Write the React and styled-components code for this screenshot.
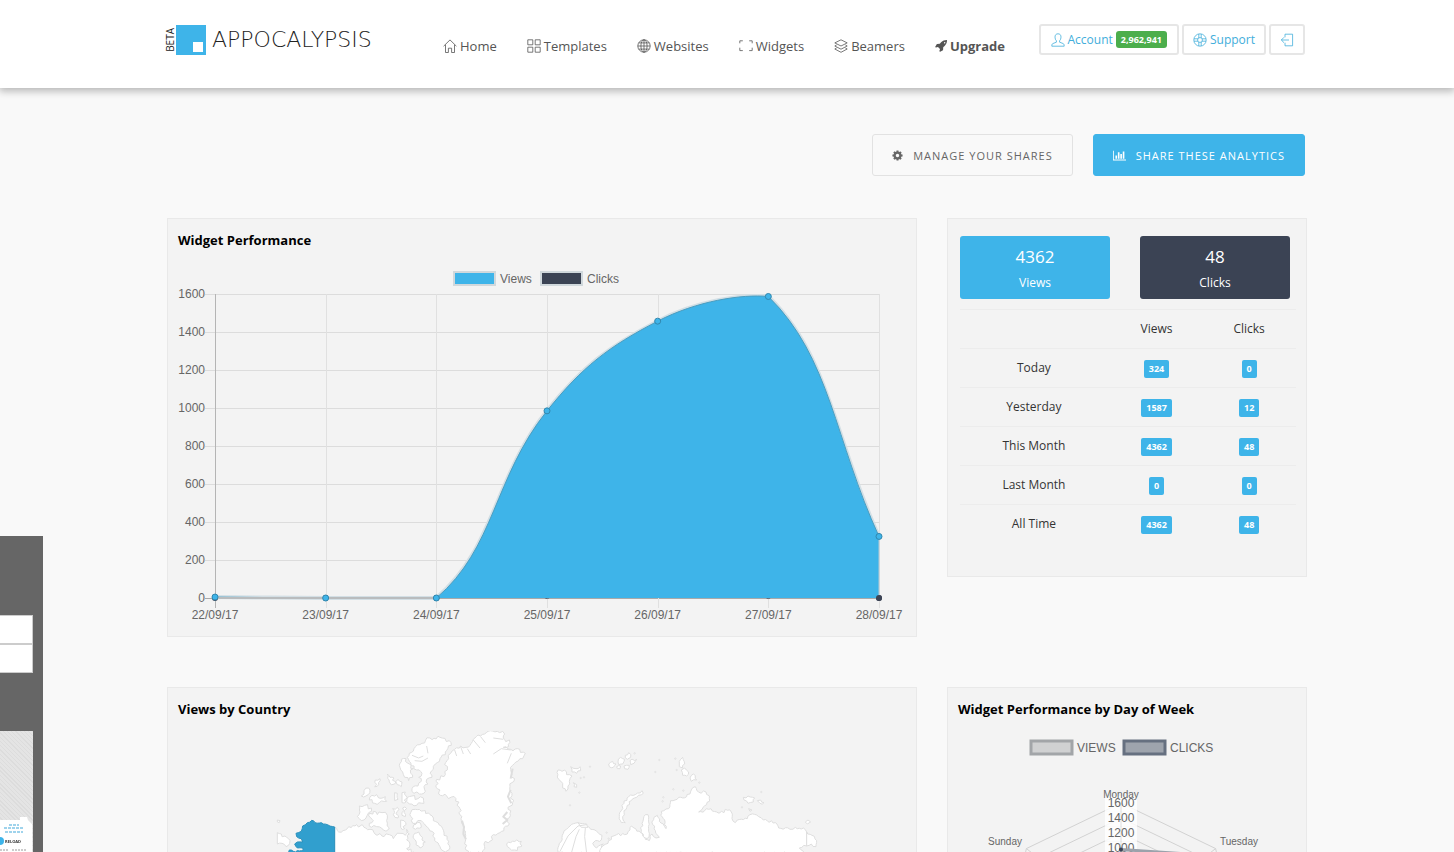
import React from "react";
import styled, { createGlobalStyle } from "styled-components";

const days = [
  { label: "22/09/17", views: 5, clicks: 0 },
  { label: "23/09/17", views: 0, clicks: 0 },
  { label: "24/09/17", views: 0, clicks: 0 },
  { label: "25/09/17", views: 985, clicks: 12 },
  { label: "26/09/17", views: 1457, clicks: 24 },
  { label: "27/09/17", views: 1587, clicks: 12 },
  { label: "28/09/17", views: 324, clicks: 0 },
];

const totals = [
  { label: "Today", views: 324, clicks: 0 },
  { label: "Yesterday", views: 1587, clicks: 12 },
  { label: "This Month", views: 4362, clicks: 48 },
  { label: "Last Month", views: 0, clicks: 0 },
  { label: "All Time", views: 4362, clicks: 48 },
];

const weekdays = [
  { label: "Monday", views: 985 },
  { label: "Tuesday", views: 1457 },
  { label: "Wednesday", views: 1587 },
  { label: "Thursday", views: 324 },
  { label: "Friday", views: 5 },
  { label: "Saturday", views: 0 },
  { label: "Sunday", views: 0 },
];

/* ---------- icons ---------- */

const HomeIcon = () => (
  <LineIcon viewBox="0 0 14 14">
    <path d="M.6 7.200 7 .9l6.400 6.300M2.500 5.800v7.700h2.900V9.200h3.200v4.300h2.900V5.800" />
  </LineIcon>
);

const GridIcon = () => (
  <LineIcon viewBox="0 0 14 14">
    <path d="M.8.8h5v5h-5zM8.200.8h5v5h-5zM.8 8.200h5v5h-5zM8.200 8.200h5v5h-5z" />
  </LineIcon>
);

const GlobeIcon = () => (
  <LineIcon viewBox="0 0 14 14">
    <circle cx="7" cy="7" r="6.200" />
    <ellipse cx="7" cy="7" rx="3.100" ry="6.200" />
    <path d="M7 .8v12.400M.8 7h12.400M1.700 3.900h10.600M1.700 10.100h10.600" />
  </LineIcon>
);

const FrameIcon = () => (
  <LineIcon viewBox="0 0 14 14">
    <path d="M.8 4.300V1.800h3M10.200 1.800h3v2.500M13.200 8.700v2.900h-3M3.800 11.600h-3V8.700" />
  </LineIcon>
);

const LayersIcon = () => (
  <LineIcon viewBox="0 0 14 14">
    <path d="M7 .8l6.200 3.100L7 7 .8 3.900zM2.600 6 .8 7 7 10.200 13.200 7l-1.800-1M2.600 9l-1.800 1L7 13.300l6.200-3.300-1.800-1" />
  </LineIcon>
);

const UserIcon = () => (
  <LineIcon viewBox="0 0 14 14">
    <path d="M7 .8c2 0 3 1.300 3 3.300 0 1.600-.5 2.900-1.400 3.700v1.400l3.400 1.300c.8.300 1.200 1 1.200 2.700H.8c0-1.700.4-2.400 1.200-2.700l3.400-1.300V7.800C4.500 7 4 5.700 4 4.100c0-2 1-3.300 3-3.300z" />
  </LineIcon>
);

const SupportIcon = () => (
  <LineIcon viewBox="0 0 14 14">
    <circle cx="7" cy="7" r="6.200" />
    <circle cx="7" cy="7" r="2.400" />
    <path d="M5.800 1v4M8.200 1v4M5.800 9v4M8.200 9v4M1 5.800h4M1 8.200h4M9 5.800h4M9 8.200h4" />
  </LineIcon>
);

const LogoutIcon = () => (
  <LineIcon viewBox="0 0 14 14">
    <path d="M5 4.300V1.200h7.600v11.600H5V9.700M9 7H1.300M4 4.300 1.300 7 4 9.700" />
  </LineIcon>
);

const RocketIcon = () => (
  <SolidIcon $size={12} viewBox="0 64 1664 1664">
    <path d="M1440 448q0-40-28-68t-68-28-68 28-28 68 28 68 68 28 68-28 28-68zM1664 96q0 249-75.500 430.500t-253.500 360.500q-81 80-195 176l-20 379q-2 16-16 26l-384 224q-7 4-16 4-12 0-23-9l-64-64q-13-14-8-32l85-276-281-281-276 85q-3 1-9 1-14 0-23-9l-64-64q-17-19-5-39l224-384q10-14 26-16l379-20q96-114 176-195 188-187 358-258t431-71q14 0 24 9.500t10 22.500z" />
  </SolidIcon>
);

const CogIcon = () => (
  <SolidIcon $size={11} viewBox="64 64 1664 1664">
    <path d="M1152 896q0-106-75-181t-181-75-181 75-75 181 75 181 181 75 181-75 75-181zm512-109v222q0 12-8 23t-20 13l-185 28q-19 54-39 91 35 50 107 138 10 12 10 25t-9 23q-27 37-99 108t-94 71q-12 0-26-9l-138-108q-44 23-91 38-16 136-29 186-7 28-36 28h-222q-14 0-24.500-8.500t-11.500-21.500l-28-184q-49-16-90-37l-141 107q-10 9-25 9-14 0-25-11-126-114-165-168-7-10-7-23 0-12 8-23 15-21 51-66.500t54-70.500q-27-50-41-99l-183-27q-13-2-21-12.500t-8-23.500v-222q0-12 8-23t19-13l186-28q14-46 39-92-40-57-107-138-10-12-10-24 0-10 9-23 26-36 98.500-107.500t94.500-71.500q13 0 26 10l138 107q44-23 91-38 16-136 29-186 7-28 36-28h222q14 0 24.500 8.500t11.500 21.500l28 184q49 16 90 37l142-107q9-9 24-9 13 0 25 10 129 119 165 170 7 8 7 22 0 12-8 23-15 21-51 66.500t-54 70.500q26 50 41 98l183 28q13 2 21 12.500t8 23.500z" />
  </SolidIcon>
);

const ChartIcon = () => (
  <SolidIcon $size={13} viewBox="0 0 2048 1792">
    <path d="M640 896v512h-256v-512h256zM1024 384v1024h-256v-1024h256zM2048 1536v128h-2048v-1536h128v1408h1920zM1408 640v768h-256v-768h256zM1792 256v1152h-256v-1152h256z" />
  </SolidIcon>
);

/* ---------- line chart ---------- */

const plot = { left: 47, right: 711, top: 32, bottom: 336 };
const maxViews = 1600;
const px = (i) => plot.left + (i * (plot.right - plot.left)) / (days.length - 1);
const py = (v) => plot.bottom - (v / maxViews) * (plot.bottom - plot.top);
const clampY = (y) => Math.min(plot.bottom, Math.max(plot.top, y));

const smoothPath = (pts, tension = 0.4) => {
  const ctrl = pts.map((p, i) => {
    const prev = pts[i - 1] || p;
    const next = pts[i + 1] || p;
    const d0 = Math.hypot(p.x - prev.x, p.y - prev.y);
    const d1 = Math.hypot(next.x - p.x, next.y - p.y);
    const a = (tension * d0) / (d0 + d1);
    const b = (tension * d1) / (d0 + d1);
    const dx = next.x - prev.x;
    const dy = next.y - prev.y;
    return {
      before: [p.x - a * dx, clampY(p.y - a * dy)],
      after: [p.x + b * dx, clampY(p.y + b * dy)],
    };
  });
  return pts
    .map((p, i) =>
      i === 0
        ? `M${p.x} ${p.y}`
        : `C${ctrl[i - 1].after} ${ctrl[i].before} ${p.x} ${p.y}`
    )
    .join("");
};

const PerformanceChart = () => {
  const line = smoothPath(days.map((d, i) => ({ x: px(i), y: py(d.views) })));
  const ticks = [0, 200, 400, 600, 800, 1000, 1200, 1400, 1600];
  return (
    <Chart viewBox="0 0 748 374" role="img" aria-label="Widget performance">
      <g stroke="#d0d8dc" strokeWidth="2" fill="none">
        <rect x="286" y="10" width="41" height="13" fill="#3eb4e9" />
        <rect x="373" y="10" width="41" height="13" fill="#3b4354" />
      </g>
      <text x="332" y="21">Views</text>
      <text x="419" y="21">Clicks</text>
      {ticks.map((t) => (
        <g key={t}>
          <path
            d={`M${plot.left - 10} ${py(t) + 0.5}H${plot.right}`}
            stroke={t ? "#dcdcdc" : "#a9a9a9"}
          />
          <text x="37" y={py(t) + 4} textAnchor="end">{t}</text>
        </g>
      ))}
      {days.map((d, i) => (
        <g key={d.label}>
          <path
            d={`M${Math.round(px(i)) + 0.5} ${plot.top}V${plot.bottom + 10}`}
            stroke={i ? "#e0e0e0" : "#b4b4b4"}
          />
          <text x={px(i)} y="357" textAnchor="middle">{d.label}</text>
        </g>
      ))}
      {days.map((d, i) => (
        <circle key={d.label} cx={px(i)} cy={py(d.clicks)} r="3" fill="#3b4354" />
      ))}
      <path d={line} fill="none" stroke="#d3dfe5" strokeWidth="4" />
      <path d={`${line}V${plot.bottom}H${plot.left}Z`} fill="#3eb4e9" />
      <path d={line} fill="none" stroke="#4a9dc0" />
      <path d={`M${px(0)} ${plot.bottom}H${px(2)}`} stroke="#b9bcbe" strokeWidth="2" />
      <path d={`M${plot.right} ${py(324)}V${plot.bottom}`} stroke="#b5cad4" />
      {days.map((d, i) => (
        <circle
          key={d.label}
          cx={px(i)}
          cy={py(d.views)}
          r="3"
          fill="#3eb4e9"
          stroke="#3187ae"
        />
      ))}
      <circle cx={plot.right} cy={plot.bottom} r="3" fill="#3b4354" />
    </Chart>
  );
};

/* ---------- map ---------- */

// Breaks every edge of an outline into a ragged coast; vertical edges are
// political borders and stay straight.
const coast = (points, size = 5) => {
  const nums = points.split(" ").map((p) => p.split(",").map(Number));
  let seed = nums[0][0] * 7 + nums[0][1] * 13;
  const rand = () => {
    seed = (seed * 9301 + 49297) % 233280;
    return seed / 233280 - 0.5;
  };
  const out = [];
  nums.forEach(([x, y], i) => {
    const [nx, ny] = nums[(i + 1) % nums.length];
    out.push([x, y]);
    const len = Math.hypot(nx - x, ny - y);
    if (nx === x || len < 8) return;
    const parts = Math.floor(len / 6);
    for (let k = 1; k < parts; k++) {
      const t = k / parts;
      const off = rand() * size;
      out.push([
        x + (nx - x) * t - ((ny - y) / len) * off,
        y + (ny - y) * t + ((nx - x) / len) * off,
      ]);
    }
  });
  return "M" + out.map(([x, y]) => `${x.toFixed(1)} ${y.toFixed(1)}`).join("L") + "Z";
};

const alaska =
  "155,391 165,398 190,402 224,411 224,600 150,600 120,520 86,486 88,480 100,484 130,480 128,474 112,474 104,462 112,456 128,456 124,446 110,440 108,430 124,424 128,408 142,398";

const america = [
  // mainland Canada
  "224,412 236,426 262,416 290,404 312,412 330,418 345,432 372,440 388,434 400,446 420,430 436,436 440,418 448,432 440,450 450,462 440,476 462,486 480,540 224,600",
  // Ellesmere and Axel Heiberg
  "448,190 462,176 486,160 510,144 540,142 568,152 574,166 556,186 540,206 526,222 520,238 510,250 516,262 500,268 504,282 492,290 496,304 478,312 462,310 456,296 474,288 484,274 476,262 486,250 470,240 462,228 448,214 442,202",
  "424,208 438,206 448,222 460,236 452,250 458,262 446,272 434,262 428,246 420,232",
  // Devon
  "442,322 456,318 474,326 490,324 492,340 470,346 448,342 440,334",
  // Banks and Victoria
  "298,348 314,346 334,354 326,368 318,384 304,392 292,380 300,366",
  "326,378 340,364 352,374 366,368 382,376 380,392 388,414 370,420 350,410 334,412 328,400 340,392",
  "304,318 312,302 326,294 330,300 318,318",
  "336,316 350,314 356,324 376,320 380,334 358,338 344,340 328,330",
  "346,270 360,266 356,284 344,290",
  "382,252 390,262 402,264 404,282 388,276",
  "414,268 426,276 424,290 412,284",
  "404,308 412,310 414,328 404,332",
  "426,308 436,306 438,336 426,338",
  "398,356 412,352 414,384 400,374",
  "428,354 440,356 436,380 426,376",
  "422,390 432,392 434,416 422,412",
  // Baffin
  "452,368 466,358 496,362 510,374 520,392 534,398 548,416 552,436 566,454 570,474 556,486 540,470 524,452 516,424 498,408 484,392 468,400 454,392",
  "462,404 480,398 484,412 466,418",
  "464,430 476,426 486,450 496,456 480,474 466,450",
  // Greenland
  "572,190 584,178 602,168 618,172 634,160 640,148 662,138 684,124 712,124 734,132 730,144 750,158 746,170 730,172 752,178 772,176 796,190 788,206 768,216 758,226 756,252 762,274 750,290 756,310 758,338 744,352 750,370 742,396 744,408 720,428 700,434 690,454 672,462 668,490 626,490 614,462 616,430 604,392 600,356 588,326 560,318 536,312 540,300 528,292 530,268 552,260 562,240 554,224 566,206",
  // Iceland
  "740,462 752,458 784,454 786,468 764,480 748,474",
  // Chukotka tip on the far left
  "52,428 64,432 80,442 90,452 78,470 66,460 52,462",
  "52,390 60,392 58,398 52,396",
];

const eurasia = [
  // Scandinavia
  "20,490 28,460 40,430 60,408 84,398 110,402 118,412 140,424 156,436 154,450 136,452 128,460 140,474 160,462 150,490",
  // Russia
  "150,490 158,468 174,460 184,440 200,434 224,434 240,420 244,408 252,414 278,430 286,448 298,452 306,432 318,444 328,442 316,422 308,404 312,382 322,376 328,394 340,402 348,416 344,390 332,376 334,364 356,356 362,332 386,322 410,320 424,300 436,290 446,306 468,306 478,326 470,344 446,366 476,358 500,366 522,368 526,358 544,366 546,386 556,398 562,390 592,386 600,374 626,380 640,390 676,398 686,414 720,418 736,412 760,414 770,426 770,468 748,474 764,490",
  "770,426 786,436 800,452 798,470 784,462 770,468",
  "276,400 286,374 294,374 296,396 298,430 292,446 280,440 274,420",
  // Novaya Zemlya
  "208,380 214,362 222,340 236,320 256,314 276,302 280,310 260,322 244,332 232,346 222,362 218,380 226,398 214,398",
  // Svalbard
  "24,240 36,244 44,240 50,254 66,258 58,274 54,288 48,304 38,294 38,280 26,268",
  "62,230 78,236 90,230 92,242 80,250 66,246",
  "70,278 80,284 80,292 72,290",
  // Severnaya Zemlya
  "388,214 398,202 404,222 398,234 388,230",
  "394,240 404,234 416,246 410,258 398,256",
  "420,264 430,252 440,270 424,274",
  // New Siberian Islands
  "580,322 594,318 614,324 610,336 594,340 582,330",
  "622,332 632,330 642,338 630,340",
  "596,356 606,360 600,364",
  "766,396 774,390 782,396 772,402",
  // Franz Josef Land
  "176,222 188,214 198,222 190,232 178,230",
  "204,216 212,202 224,208 218,222 206,224",
  "226,196 236,188 242,202 232,208",
  "240,212 260,208 252,220 242,224",
  "222,228 238,226 234,238 224,236",
  "200,230 212,228 210,236 202,236",
];

const specks = [
  [120, 230], [102, 262], [92, 264], [88, 308], [60, 346], [328, 210], [316, 246],
  [376, 206], [380, 240], [370, 298], [400, 302], [340, 322], [338, 334],
  [448, 278], [576, 352], [634, 306], [254, 190], [170, 428], [176, 446],
];

const WorldMap = () => (
  <Chart viewBox="178 731 728 300" role="img" aria-label="Views by country">
    <g fill="#fff" stroke="#dedede" strokeWidth="3" strokeLinejoin="round">
      <g transform="translate(260 690) scale(.3333)">
        {america.map((p) => (
          <path key={p} d={coast(p, 12)} />
        ))}
        <path d="M456 196l20 8 14-6M464 212l22 2 18-10M500 168l4 22M584 180l6 18M602 170l8 22M622 176l10 16M640 150l20 24M662 140l14 18M700 192l24-16 28 4M742 220l12-30M700 144l30 4" fill="none" />
        <path d="M606 392l6 20-2 20 8 16M752 300l-8 20 10 20M742 366l-12 14 12 10-14 12M758 236l-6 30" fill="none" strokeWidth="6" />
        <path d={coast(alaska, 6)} fill="#319fce" stroke="#2b91bd" />
      </g>
      <g transform="translate(550 690) scale(.3333)">
        {eurasia.map((p) => (
          <path key={p} d={coast(p, 8)} />
        ))}
        <path d="M30 484l24-46 30-30 26-4M64 490l14-50 10-22M110 490l-6-50 2-26M84 398l10 14 20 0" fill="none" />
        {specks.map(([x, y]) => (
          <circle key={`${x}-${y}`} cx={x} cy={y} r="2" />
        ))}
      </g>
    </g>
  </Chart>
);

/* ---------- radar ---------- */

const centre = { x: 173, y: 193, r: 121 };
const spoke = (i, v = maxViews) => {
  const a = (i * 2 * Math.PI) / weekdays.length;
  const r = (v / maxViews) * centre.r;
  return [centre.x + r * Math.sin(a), centre.y - r * Math.cos(a)];
};

const RadarChart = () => (
  <Chart viewBox="0 0 358 340" role="img" aria-label="Widget performance by day of week">
    <rect x="83" y="10" width="41" height="13" fill="#d0d1d2" stroke="#a2a5a8" strokeWidth="3" />
    <rect x="176" y="10" width="41" height="13" fill="#9ea4ad" stroke="#667080" strokeWidth="3" />
    <text x="129" y="21">VIEWS</text>
    <text x="222" y="21">CLICKS</text>
    <g fill="none" stroke="#d2d2d2">
      {[400, 600, 800, 1000, 1200, 1400, 1600].map((v) => (
        <polygon key={v} points={weekdays.map((_, i) => spoke(i, v)).join(" ")} />
      ))}
      {weekdays.map((d, i) => (
        <path key={d.label} d={`M${centre.x} ${centre.y}L${spoke(i)}`} />
      ))}
    </g>
    {[1600, 1400, 1200, 1000, 800, 600, 400, 200].map((v) => {
      const y = spoke(0, v)[1];
      return (
        <g key={v}>
          <rect x="157" y={y - 7} width="32" height="15" fill="#fff" fillOpacity=".8" />
          <text x="173" y={y + 8} textAnchor="middle" dy="-4">{v}</text>
        </g>
      );
    })}
    <polygon
      points={weekdays.map((d, i) => spoke(i, d.views)).join(" ")}
      fill="#9ea4ad40"
      stroke="#9ba2ab"
      strokeWidth="3"
    />
    <path d={`M${centre.x} ${centre.y}V${centre.y - centre.r}`} stroke="#00000018" />
    <circle cx={centre.x} cy={spoke(0, 985)[1]} r="2" fill="#3b4354" />
    <SmallText x="173" y="67" textAnchor="middle">Monday</SmallText>
    <SmallText x="272" y="114">Tuesday</SmallText>
    <SmallText x="74" y="114" textAnchor="end">Sunday</SmallText>
  </Chart>
);

/* ---------- page ---------- */

const App = () => {
  return (
    <>
      <GlobalStyle />
      <Page>
        <Header>
          <HeaderInner>
            <Logo href="#" aria-label="Appocalypsis beta">
              <Beta>BETA</Beta>
              <LogoMark />
              <LogoText>APPOCALYPSIS</LogoText>
            </Logo>
            <Nav>
              <NavLink href="#"><HomeIcon />Home</NavLink>
              <NavLink href="#"><GridIcon />Templates</NavLink>
              <NavLink href="#"><GlobeIcon />Websites</NavLink>
              <NavLink href="#"><FrameIcon />Widgets</NavLink>
              <NavLink href="#"><LayersIcon />Beamers</NavLink>
              <NavLink href="#" $strong><RocketIcon />Upgrade</NavLink>
            </Nav>
            <Actions>
              <ActionButton $wide>
                <UserIcon />
                Account
                <Credits>2,962,941</Credits>
              </ActionButton>
              <ActionButton><SupportIcon />Support</ActionButton>
              <ActionButton aria-label="Log out"><LogoutIcon /></ActionButton>
            </Actions>
          </HeaderInner>
        </Header>
        <Main>
          <ButtonRow>
            <Button><CogIcon />MANAGE YOUR SHARES</Button>
            <Button $primary><ChartIcon />SHARE THESE ANALYTICS</Button>
          </ButtonRow>
          <Columns>
            <Panel>
              <PanelTitle>Widget Performance</PanelTitle>
              <PerformanceChart />
            </Panel>
            <Panel>
              <Stats>
                <Stat>
                  <strong>4362</strong>
                  <span>Views</span>
                </Stat>
                <Stat $dark>
                  <strong>48</strong>
                  <span>Clicks</span>
                </Stat>
              </Stats>
              <Table>
                <thead>
                  <tr>
                    <td />
                    <th scope="col">Views</th>
                    <th scope="col">Clicks</th>
                  </tr>
                </thead>
                <tbody>
                  {totals.map((row) => (
                    <tr key={row.label}>
                      <th scope="row">{row.label}</th>
                      <td><Badge>{row.views}</Badge></td>
                      <td><Badge>{row.clicks}</Badge></td>
                    </tr>
                  ))}
                </tbody>
              </Table>
            </Panel>
          </Columns>
          <Columns>
            <Panel>
              <PanelTitle>Views by Country</PanelTitle>
              <MapArea>
                <WorldMap />
              </MapArea>
            </Panel>
            <Panel>
              <PanelTitle>Widget Performance by Day of Week</PanelTitle>
              <RadarChart />
            </Panel>
          </Columns>
        </Main>
        <Drawer>
          <DrawerField aria-label="First field" />
          <DrawerField aria-label="Second field" />
          <DrawerPreview>
            <svg viewBox="0 0 33 32" width="33" height="32">
              <path d="M0 0h20v-3h7l1 3 4 4v28H0z" fill="#fff" />
              <path d="M9 5h10M4 8h20M5 12h18" stroke="#9fd3ec" strokeWidth="2" strokeDasharray="3 1" />
              <circle cx="0" cy="21" r="4" fill="#3eb4e9" />
              <text x="5" y="23" fontSize="4" fontWeight="700" fill="#333">RELOAD</text>
              <path d="M0 30h9M12 30h14" stroke="#999" strokeDasharray="2 1" />
            </svg>
          </DrawerPreview>
        </Drawer>
      </Page>
    </>
  );
};

export default App;

const GlobalStyle = createGlobalStyle`
  * {
    box-sizing: border-box;
  }
  body {
    margin: 0;
    background-color: #f9f9f9;
    font-family: "Open Sans", sans-serif;
    font-size: 12px;
    color: #333;
  }
  button {
    font-family: inherit;
    cursor: pointer;
  }
`;

const Page = styled.div`
  height: 100vh;
  overflow-x: hidden;
  overflow-y: auto;
  scrollbar-width: none;
`;

const Header = styled.header`
  background-color: #fff;
  height: 88px;
  padding: 24px 0 0 16px;
  box-shadow: 0 2px 8px 1px #00000048;
`;

const HeaderInner = styled.div`
  display: flex;
  align-items: flex-start;
  max-width: 1140px;
  margin: 0 auto;
`;

const Logo = styled.a`
  display: flex;
  align-items: center;
  width: 209px;
  height: 31px;
  color: #222;
  text-decoration: none;
`;

const Beta = styled.span`
  writing-mode: vertical-rl;
  transform: rotate(180deg);
  width: 11px;
  font-size: 10px;
  line-height: 11px;
`;

const LogoMark = styled.span`
  width: 30px;
  height: 30px;
  background-color: #3eb4e9;
  display: flex;
  align-items: flex-end;
  justify-content: flex-end;
  padding: 3px;
  &::after {
    content: "";
    width: 10px;
    height: 10px;
    background-color: #fff;
  }
`;

const LogoText = styled.span`
  margin-left: 6px;
  font-family: "DejaVu Sans", sans-serif;
  font-weight: 200;
  font-size: 22px;
  line-height: 30px;
`;

const Nav = styled.nav`
  display: flex;
  gap: 30px;
  margin: 12px 0 0 69px;
`;

const NavLink = styled.a`
  display: flex;
  align-items: center;
  gap: 3px;
  font-size: 13px;
  line-height: 20px;
  font-weight: ${({ $strong }) => ($strong ? 700 : 400)};
  color: #555;
  text-decoration: none;
`;

const LineIcon = styled.svg`
  width: 14px;
  height: 14px;
  fill: none;
  stroke: currentColor;
  stroke-width: 0.8;
  flex: none;
`;

const SolidIcon = styled.svg`
  width: ${({ $size }) => $size}px;
  height: ${({ $size }) => $size}px;
  fill: currentColor;
  flex: none;
`;

const Actions = styled.div`
  display: flex;
  gap: 3px;
  margin-left: auto;
`;

const ActionButton = styled.button`
  display: flex;
  align-items: center;
  gap: 3px;
  height: 31px;
  padding: 0 ${({ $wide }) => ($wide ? 10 : 9)}px;
  background-color: #fff;
  border: 2px solid #e6e6e6;
  border-radius: 3px;
  font-size: 12px;
  color: #42aedb;
`;

const Credits = styled.span`
  padding: 0 5px;
  background-color: #4cae4c;
  border-radius: 3px;
  font-size: 9px;
  font-weight: 700;
  line-height: 17px;
  color: #fff;
`;

const Main = styled.main`
  padding: 46px 0 50px 20px;
`;

const ButtonRow = styled.div`
  display: flex;
  justify-content: flex-end;
  gap: 20px;
  max-width: 1140px;
  margin: 0 auto 42px;
  padding-right: 2px;
`;

const Button = styled.button`
  display: flex;
  align-items: center;
  gap: 10px;
  height: 42px;
  padding: 0 19px;
  border: 1px solid ${({ $primary }) => ($primary ? "#3eb4e9" : "#e2e2e2")};
  border-radius: 3px;
  background-color: ${({ $primary }) => ($primary ? "#3eb4e9" : "transparent")};
  font-size: 11px;
  letter-spacing: 1px;
  color: ${({ $primary }) => ($primary ? "#fff" : "#666")};
`;

const Columns = styled.div`
  display: grid;
  grid-template-columns: 25fr 12fr;
  align-items: start;
  gap: 30px;
  max-width: 1140px;
  margin: 0 auto 50px;
`;

const Panel = styled.section`
  background-color: #f3f3f3;
  border: 1px solid #e9e9e9;
`;

const PanelTitle = styled.h2`
  margin: 0;
  padding: 11px 10px 12px;
  font-size: 13px;
  line-height: 20px;
  font-weight: 700;
  color: #000;
`;

const Chart = styled.svg`
  display: block;
  width: 100%;
  height: auto;
  text {
    font-family: "Liberation Sans", sans-serif;
    font-size: 12px;
    fill: #666;
  }
`;

const SmallText = styled.text`
  && {
    font-size: 10px;
  }
`;

const MapArea = styled.div`
  padding: 0 10px;
`;

const Stats = styled.div`
  display: grid;
  grid-template-columns: 1fr 1fr;
  gap: 30px;
  padding: 17px 16px 10px 12px;
`;

const Stat = styled.div`
  display: flex;
  flex-direction: column;
  align-items: center;
  padding: 8px 0 3px;
  border-radius: 3px;
  background-color: ${({ $dark }) => ($dark ? "#3b4354" : "#3eb4e9")};
  color: #fff;
  strong {
    font-size: 17px;
    font-weight: 400;
    line-height: 26px;
  }
  span {
    line-height: 26px;
  }
`;

const Table = styled.table`
  width: calc(100% - 22px);
  margin: 0 10px 33px 12px;
  border-spacing: 0;
  table-layout: fixed;
  text-align: center;
  th,
  td {
    height: 39px;
    padding: 0;
    border-top: 1px solid #ececec;
    font-weight: 400;
    vertical-align: middle;
  }
  th {
    padding-bottom: 2px;
  }
  th:last-child,
  td:last-child {
    padding-right: 3px;
  }
  thead td {
    width: 44%;
  }
  thead th:nth-child(2) {
    width: 29%;
  }
`;

const Badge = styled.span`
  display: inline-block;
  padding: 0 5px;
  border-radius: 2px;
  background-color: #3eb4e9;
  font-size: 9px;
  font-weight: 700;
  line-height: 18px;
  color: #fff;
`;

const Drawer = styled.aside`
  position: fixed;
  left: 0;
  bottom: 0;
  display: flex;
  flex-direction: column;
  width: 43px;
  height: 316px;
  padding: 79px 10px 0 0;
  background-color: #666;
`;

const DrawerField = styled.input`
  width: 100%;
  height: 29px;
  border: 1px solid #ccc;
  border-left: none;
  background-color: #fff;
`;

const DrawerPreview = styled.div`
  display: flex;
  align-items: flex-end;
  flex: 1;
  margin-top: 58px;
  background: repeating-linear-gradient(45deg, #dcdcdc 0 1px, #e4e4e4 1px 3px);
  svg {
    overflow: visible;
  }
`;
